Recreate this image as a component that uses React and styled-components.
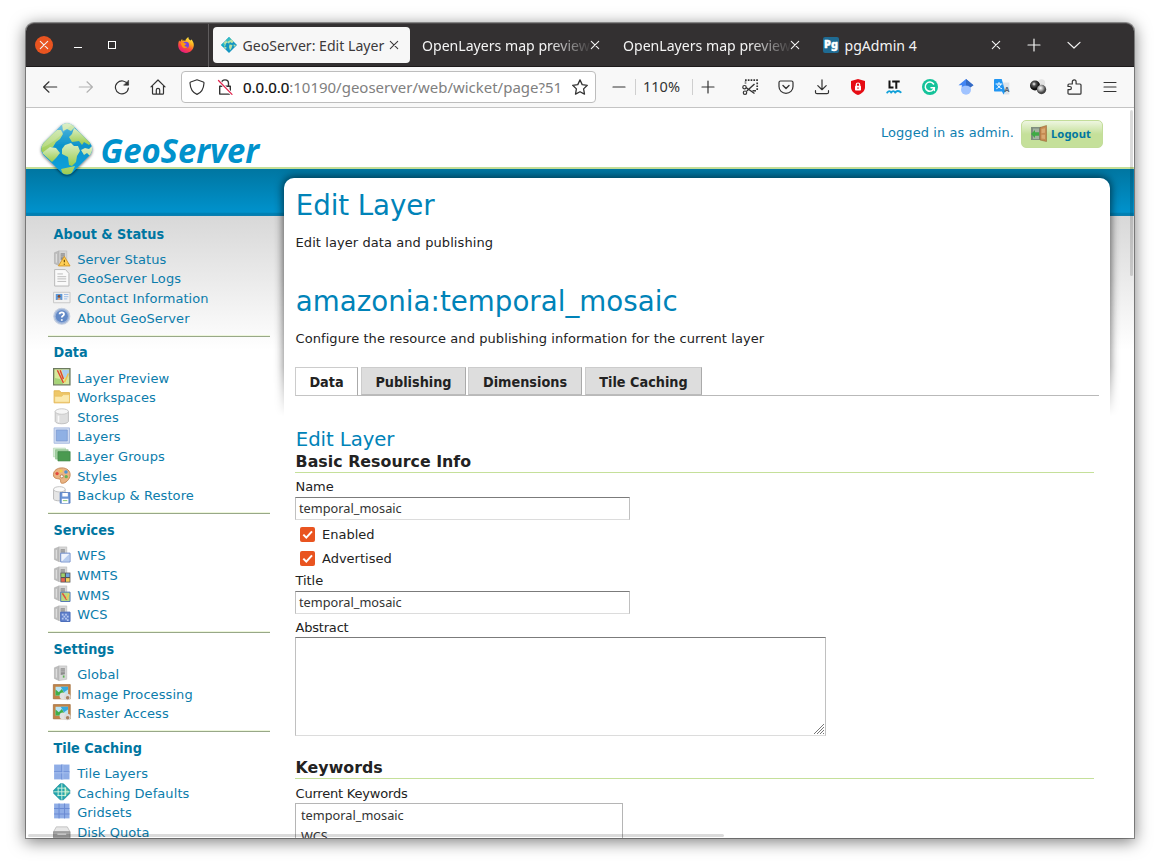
import React from "react";
import styled, { createGlobalStyle, css } from "styled-components";

const ui = '"Noto Sans", "Open Sans", sans-serif';
const page = '"DejaVu Sans", Verdana, sans-serif';
const heading = '"DejaVu Sans Condensed", "DejaVu Sans", Tahoma, sans-serif';
const link = "#0076a1";

const GlobalStyle = createGlobalStyle`
  * { box-sizing: border-box; }
  body { margin: 0; background: #fff; overflow: hidden; }
  h1, h2, h3, p, ul { margin: 0; padding: 0; font-weight: normal; }
  svg { display: block; flex: none; overflow: visible; }
`;

const Desktop = styled.div`
  width: 1160px;
  height: 867px;
  padding: 23px 26px 29px;
  overflow: hidden;
`;

const Window = styled.div`
  position: relative;
  width: 1108px;
  height: 815px;
  display: flex;
  flex-direction: column;
  border-radius: 8px 8px 0 0;
  box-shadow: 0 0 0 1px rgba(0, 0, 0, 0.36), 0 3px 16px 1px rgba(0, 0, 0, 0.5);
`;

/* ---------- title bar ---------- */

const TitleBar = styled.div`
  height: 44px;
  flex: none;
  display: flex;
  align-items: center;
  background: #333031;
  border-top: 1px solid #4b4849;
  border-bottom: 1px solid #1d1a1b;
  border-radius: 8px 8px 0 0;
  color: #f4f4f4;
  font: 14.1px ${ui};
`;

const WindowControls = styled.div`
  width: 183px;
  height: 43px;
  display: flex;
  align-items: center;
  border-right: 1px solid #5f5c5d;
  flex: none;
`;

const CloseWindow = styled.div`
  width: 18px;
  height: 18px;
  margin-left: 9px;
  border-radius: 50%;
  background: #e95420;
  display: grid;
  place-items: center;
`;

const Minimise = styled.div`
  width: 8px;
  height: 1px;
  margin: 5px 26px 0 21px;
  background: #fff;
`;

const Maximise = styled.div`
  width: 8px;
  height: 8px;
  border: 1px solid #fff;
  margin-right: 62px;
`;

const Tab = styled.div`
  width: ${(p) => p.$w}px;
  height: 36px;
  padding: 0 ${(p) => p.$end || 12}px 0 ${(p) => p.$pad || 8}px;
  display: flex;
  align-items: center;
  border-radius: 4px;
  flex: none;
  gap: 5.5px;
  ${(p) => p.$active && css`
    margin-left: 4px;
    background: #f7f7f7;
    color: #3c3a3b;
  `}
`;

const TabTitle = styled.span`
  flex: 1;
  min-width: 0;
  padding-top: 2px;
  line-height: 20px;
  white-space: nowrap;
  overflow: hidden;
  ${(p) => p.$fade && css`
    margin-right: -5px;
    mask-image: linear-gradient(to right, #000 75%, transparent 101%);
  `}
`;

const TabButton = styled.div`
  width: 40px;
  display: grid;
  place-items: center;
`;

/* ---------- navigation toolbar ---------- */

const Toolbar = styled.div`
  height: 41px;
  flex: none;
  display: flex;
  align-items: center;
  padding: 0 6px;
  background: #f8f8f8;
  border-bottom: 1px solid #c4c4c4;
  color: #333;
  font: 14.5px ${ui};
`;

const Slot = styled.div`
  width: ${(p) => p.$w || 36}px;
  height: 32px;
  margin-right: ${(p) => p.$end || 0}px;
  display: grid;
  place-items: center;
  flex: none;
  color: ${(p) => (p.$dim ? "#b2b2b2" : "#333")};
`;

const UrlBar = styled.div`
  width: 415px;
  height: 32px;
  margin: 0 6px 0 5px;
  padding: 0 7px 0 7px;
  display: flex;
  align-items: center;
  background: #fff;
  border: 1px solid #bdbdbd;
  border-radius: 4px;
  flex: none;
`;

const Security = styled.div`
  display: flex;
  gap: 12px;
`;

const UrlText = styled.span`
  flex: 1;
  margin-left: 10px;
  font-size: 14.97px;
  line-height: 22px;
  white-space: nowrap;
  overflow: hidden;
  color: #808080;
  b { font-weight: normal; color: #0c0c0c; -webkit-text-stroke: 0.2px #0c0c0c; }
`;

const Divider = styled.div`
  width: 1px;
  height: 16px;
  background: #cfcfcf;
`;

const Zoom = styled.div`
  width: 56px;
  padding-left: 7px;
  margin-top: -2px;
`;

/* ---------- page ---------- */

const Viewport = styled.div`
  position: relative;
  flex: 1;
  min-height: 0;
  overflow: hidden;
  background: #fff;
  font: 13px ${page};
  letter-spacing: 0.08px;
  color: #222;
`;

const Header = styled.div`
  height: 59px;
  display: flex;
  justify-content: flex-end;
  padding: 12px 31px 0 0;
`;

const Logo = styled.div`
  position: absolute;
  left: 11px;
  top: 11px;
  z-index: 2;
`;

const Login = styled.span`
  color: #0e80b0;
  line-height: 26px;
  margin-right: 7px;
`;

const Logout = styled.div`
  width: 82px;
  height: 28px;
  display: flex;
  align-items: center;
  gap: 4px;
  padding: 0 0 2px 8px;
  border-radius: 5px;
  border: 1px solid #c3dd9a;
  background: linear-gradient(#eef6e1 0, #c5e09a 50%);
  color: ${link};
  font: bold 11.2px ${ui};
`;

const BlueBar = styled.div`
  height: 49px;
  border-top: 2px solid #c5df98;
  border-bottom: 1px solid #0a7eb0;
  background: linear-gradient(#0076a1, #0092cc 94%, #0080b3 96%);
`;

const Body = styled.div`
  display: flex;
  align-items: flex-start;
  height: 622px;
  background: linear-gradient(#d8d8d8, #fff 134px);
`;

const Sidebar = styled.nav`
  width: 258px;
  flex: none;
  padding: 2px 14px 0 22px;
`;

const Section = styled.section`
  padding: 6.7px 0 7.6px 5px;
  border-bottom: 1px solid #98a888;
  box-shadow: inset 0 -1px #eef7dc;
`;

const SectionTitle = styled.h3`
  && { font-weight: bold; }
  margin-bottom: 6.8px;
  padding-left: 0.5px;
  color: ${link};
  font: 14.3px/18px ${heading};
  letter-spacing: 0;
`;

const NavItem = styled.li`
  list-style: none;
  display: flex;
  align-items: center;
  gap: 6.6px;
  height: 19.66px;
  color: #0b7cab;
  white-space: nowrap;
  svg { margin-top: -2px; }
`;

const PanelWrap = styled.div`
  position: relative;
  z-index: 1;
`;

const Shade = styled.div`
  position: absolute;
  z-index: 0;
  left: -12px;
  right: -12px;
  top: -48px;
  height: 248px;
  padding: 10px 12px 0;
  overflow: hidden;
  mask-image: linear-gradient(#000 45%, rgba(0, 0, 0, 0.75) 80%, transparent);
  &::before {
    content: "";
    display: block;
    height: 300px;
    border-radius: 10px;
    box-shadow: 0 0 8px 1px rgba(0, 0, 0, 0.62);
  }
`;

const Card = styled.main`
  position: relative;
  z-index: 1;
  width: 826px;
  height: 660px;
  margin-top: -38px;
  padding: 11px 11px 0;
  background: #fff;
  border-radius: 10px 10px 0 0;
`;

const PageTitle = styled.h1`
  padding-left: 0.8px;
  font-size: 27.7px;
  line-height: 34px;
  letter-spacing: ${(p) => (p.$top ? 0.02 : -0.1)}px;
  margin-top: ${(p) => p.$top || 0}px;
  color: #0083b8;
`;

const Description = styled.p`
  padding-left: 0.5px;
  line-height: 20px;
  margin-top: 10px;
`;

const Tabs = styled.div`
  display: flex;
  height: 29px;
  margin-top: 17.6px;
  border-bottom: 1px solid #b9b9b9;
`;

const PageTab = styled.div`
  width: ${(p) => p.$w}px;
  height: ${(p) => (p.$active ? 29 : 28)}px;
  margin-right: ${(p) => p.$gap || 0}px;
  text-align: center;
  font: bold 14.3px/29px ${heading};
  letter-spacing: 0;
  border: 1px solid #ccc;
  border-right-color: #aaa;
  border-bottom-color: ${(p) => (p.$active ? "#c4c4c4" : "#bbb")};
  background: ${(p) => (p.$active ? "#fff" : "#ddd")};
`;

const FormTitle = styled.h2`
  margin-top: 32px;
  margin-bottom: -1px;
  padding-left: 0.8px;
  font-size: 19.7px;
  line-height: 24px;
  letter-spacing: -0.08px;
  color: #0083b8;
`;

const Legend = styled.h3`
  && { font-weight: bold; }
  width: 799px;
  height: 22px;
  margin: ${(p) => p.$top || 0}px 0 4px;
  padding-left: 0.6px;
  font-size: 15.8px;
  line-height: 21px;
  letter-spacing: 0.03px;
  border-bottom: 1px solid #c5e09a;
`;

const Label = styled.div`
  height: 20px;
  line-height: ${(p) => p.$line || 20}px;
  padding-left: 0.5px;
  letter-spacing: ${(p) => (p.$tight ? -0.2 : -0.05)}px;
  margin-top: ${(p) => p.$top || 0}px;
`;

const field = css`
  border: 1px solid #c0c0c0;
  border-top-color: #7b7b7b;
  border-bottom-color: #dcdcdc;
  background: #fff;
`;

const TextField = styled.div`
  ${field}
  width: 335px;
  height: 23px;
  padding-left: 3px;
  font: 12.75px/20px ${ui};
  letter-spacing: 0;
  color: #333;
  margin-bottom: ${(p) => p.$bottom || 0}px;
`;

const CheckRow = styled.div`
  height: 24px;
  display: flex;
  align-items: center;
  gap: 7px;
  padding: 1px 0 0 5px;
  line-height: 21px;
  letter-spacing: 0;
`;

const TextArea = styled.div`
  ${field}
  width: 531px;
  height: 99px;
  display: flex;
  align-items: flex-end;
  justify-content: flex-end;
  padding: 1px;
`;

const KeywordList = styled.div`
  width: 328px;
  height: 90px;
  padding: 1px 5px;
  border: 1px solid #b5b5b5;
  font: 12.75px/21px ${ui};
  letter-spacing: 0;
  color: #333;
`;

const ScrollThumb = styled.div`
  position: absolute;
  z-index: 3;
  background: rgba(0, 0, 0, 0.14);
  border-radius: 2px;
  ${(p) => p.$vertical
    ? css`top: 2px; right: 1px; width: 3px; height: 166px;`
    : css`left: 2px; bottom: 1px; width: 696px; height: 3px;`}
`;

/* ---------- drawings ---------- */

const Icon = ({ s = 16, children, ...rest }) => (
  <svg width={s} height={s} viewBox="0 0 16 16" fill="none" stroke="currentColor" strokeWidth="1.2" strokeLinecap="round" strokeLinejoin="round" {...rest}>
    {children}
  </svg>
);

const Cross = ({ s = 8 }) => (
  <svg width={s} height={s} viewBox="0 0 8 8" stroke="currentColor" strokeWidth="1.1" strokeLinecap="round">
    <path d="M.3.3l7.4 7.4M7.7.3L.3 7.7" />
  </svg>
);

const Firefox = () => (
  <Icon stroke="none">
    <defs>
      <linearGradient id="fx" x1="0.8" y1="0" x2="0.3" y2="1">
        <stop offset="0" stopColor="#fff44f" /><stop offset=".35" stopColor="#ffb01e" />
        <stop offset=".65" stopColor="#ff4a3c" /><stop offset="1" stopColor="#e31587" />
      </linearGradient>
    </defs>
    <path fill="url(#fx)" d="M1.2 3.600l.9 1.200C2.800 3.600 3.400 2.500 4.200 2l.2 1.700c1.100-.2 2-.1 2.800.3C7.600 2.500 9 .8 10.400 0c-.1 2 .9 2.500 2 3.600.6-.3.7-.8.6-1.300C15 3.900 16 6.300 15.800 8.600 15.500 13 12 16 8 16S.3 12.700.2 8.600C.1 6.800.6 5 1.200 3.600z" />
    <circle cx="7.800" cy="8" r="3.200" fill="#7542e5" />
    <path fill="#ff980e" d="M2.800 6c1.200-.9 3-.9 4 .2l1.700.5c.3.800-1.300 1-1.700 1.400C6.100 9 7.200 10.300 9.500 9.700c-1 2-4.300 1.900-5.400-.2-.6-1.100-1.200-2.400-1.300-3.500z" />
  </Icon>
);

const GeoFavicon = () => (
  <Icon stroke="none">
    <path fill="#1295c2" d="M8 0l8 8-8 8-8-8z" />
    <path fill="#b9e0a5" d="M7 1.500L9 1l3.600 3.600-1.500 1.700L9 5 8 6.800 6.700 5.500 5 6.500 4 9.500 1.500 7zM8.500 7.500l3 .5-1 3.200L9 13.500 8 10zM12.500 7.500L15 8l-2 2zM3.500 9.500l2 .8-.5 2-2-2z" />
    <path fill="#0fb3c9" d="M8 0l2.400 2.400L6 5 5 3zM0 8l2.500-2.500L4 7.500 2.300 10.200z" opacity=".75" />
  </Icon>
);

const PgIcon = () => (
  <Icon stroke="none">
    <rect width="16" height="16" rx="2" fill="#1f6b93" />
    <text x="8" y="11" textAnchor="middle" fontFamily="Noto Sans" fontWeight="900" fontSize="11" fill="#fff" stroke="#fff" strokeWidth=".4">Pg</text>
  </Icon>
);

const Back = () => <Icon><path d="M14.700 8H1.800M7 2.800L1.600 8 7 13.200" /></Icon>;
const Forward = () => <Icon><path d="M1.300 8h12.900M9 2.800L14.400 8 9 13.200" /></Icon>;
const Reload = () => (
  <Icon><path d="M13.800 5.600A6.500 6.500 0 1 0 14.400 9" /><path d="M14.600 1.500v4.700H9.900z" fill="currentColor" strokeWidth=".6" /></Icon>
);
const Home = () => (
  <Icon><path d="M1 7.900L8 1l7 6.900M2.500 6.900v7.300c0 .6.3.9.9.9h9.200c.6 0 .9-.3.9-.9V6.900M6.300 15v-4c0-1 .5-1.700 1.700-1.700s1.700.7 1.700 1.700v4" /></Icon>
);
const Shield = () => (
  <Icon><path d="M8 .8l6.300 2.200c.6.200.7.600.7 1C14.700 9.500 12 13.800 8 15.400 4 13.800 1.300 9.500 1 4c0-.4.100-.8.700-1z" /></Icon>
);
const InsecureLock = () => (
  <Icon strokeWidth="1.400">
    <path d="M4.500 7V4.200C4.500 2 6 .9 8 .9s3.500 1.100 3.500 3.300V7M2.700 7.300h10.600v7.800H2.700z" />
    <path d="M1.500 1.500L15 15.400" stroke="#fff" strokeWidth="3" />
    <path d="M1.500 1.500L15 15.400" stroke="#e22850" strokeWidth="1.300" />
  </Icon>
);
const Star = () => (
  <Icon strokeWidth="1.300"><path d="M8 .9l2.200 4.700 5.100.7-3.700 3.600.9 5.200L8 12.700 3.500 15.100l.9-5.200L.7 6.300l5.100-.7z" /></Icon>
);
const Minus = () => <Icon s={12}><path d="M0 8h16" strokeWidth="1.600" /></Icon>;
const Plus = ({ s = 12 }) => <Icon s={s}><path d="M0 8h16M8 0v16" strokeWidth="1.600" /></Icon>;
const Chevron = () => <Icon s={12}><path d="M0 4.500l8 7.500 8-7.500" strokeWidth="1.600" /></Icon>;
const Screenshot = () => (
  <Icon strokeLinecap="butt">
    <path d="M3 1.200H16" strokeWidth="1.700" strokeDasharray="1.700 1.100" />
    <path d="M15.200 3.500V12" strokeWidth="1.700" strokeDasharray="1.700 1.200" />
    <path d="M3.500 2.600v2.400" strokeWidth="1.700" strokeDasharray="1 .8" />
    <path d="M4.800 12L12.500 5M4 8.500l8.500 6" strokeWidth="1.400" />
    <circle cx="2.500" cy="8.200" r="1.700" />
    <circle cx="3" cy="13.700" r="1.700" />
    <path d="M10.500 11.800h3.500" strokeWidth="1.500" />
  </Icon>
);
const Pocket = () => (
  <Icon><path d="M2.500 2h11c.9 0 1.500.6 1.500 1.500v4c0 4-3.100 6.800-7 6.800S1 11.500 1 7.500v-4C1 2.600 1.600 2 2.500 2z" /><path d="M5 6.500l3 2.900 3-2.900" strokeWidth="1.400" /></Icon>
);
const Download = () => (
  <Icon><path d="M8 .8v9.700M3.800 6.600L8 10.700l4.200-4.100M1.500 11.700v1.500c0 .9.500 1.500 1.500 1.500h10c1 0 1.500-.6 1.500-1.500v-1.500" /></Icon>
);
const Blocker = () => (
  <Icon stroke="none">
    <path fill="#e60c14" d="M8 0l7 2v6c0 4-3 6.500-7 8-4-1.500-7-4-7-8V2z" />
    <rect x="5" y="6.700" width="6" height="4.800" rx=".8" fill="#fff" />
    <path d="M6.300 7V5.500c0-2 3.400-2 3.400 0V7" stroke="#fff" strokeWidth="1.200" fill="none" />
    <path fill="#e60c14" d="M7.500 8.200h1v1.900h-1z" />
  </Icon>
);
const LanguageTool = () => (
  <Icon stroke="none">
    <path fill="none" stroke="#141414" strokeWidth="2" strokeLinecap="butt" strokeLinejoin="miter" d="M3.500 1.500v7H7.500M6.200 2.500h7.500M10.300 2.500v7.200" />
    <path stroke="#12a0d8" strokeWidth="1.900" d="M1.200 13.600c1.500-2 2.800-2 4 0 1.300-2 2.800-2 4 0 1.500-2 3.200-2 5.500-.3" fill="none" />
  </Icon>
);
const Grammarly = () => (
  <Icon stroke="none">
    <circle cx="8" cy="8" r="8" fill="#15c39a" />
    <path d="M11.600 5A4.600 4.600 0 1 0 12.300 8.800H9" stroke="#fff" strokeWidth="1.500" fill="none" />
    <path d="M12.400 8.600v3" stroke="#fff" strokeWidth="1.300" />
  </Icon>
);
const Scholar = () => (
  <Icon stroke="none">
    <circle cx="8" cy="10.700" r="5" fill="#a0c3ff" />
    <path fill="#4285f4" d="M8 0L.5 6.200h3.600L3.500 8.500C5 6 11 6 12.500 8.500l-.6-2.300h3.600z" />
    <path fill="#356ac3" d="M8 0l7.500 6.200-3 2.400C11.500 6.900 10 6.200 8 6.200z" />
  </Icon>
);
const Translate = () => (
  <Icon stroke="none">
    <path fill="#dfe3e8" d="M7 3.500h8.300v12H9z" />
    <path fill="#2196f3" d="M0 1C0 .5.500 0 1 0h6.700l3.500 12.500H1c-.6 0-1-.4-1-1zM8 12.500h3L9.500 15.500z" />
    <path stroke="#fff" strokeWidth="1" d="M2 5h6M5 3.500V5M6.800 5.300C6 7.500 4 9 2.700 9.600M3.500 6c.7 1.500 2.200 3 4 3.600" />
    <text x="10.600" y="12.800" fontFamily="Noto Sans" fontSize="7" fontWeight="bold" fill="#56636e">A</text>
  </Icon>
);
const Spheres = () => (
  <Icon stroke="none">
    <defs>
      <radialGradient id="dk" cx=".4" cy=".35"><stop offset="0" stopColor="#fff" /><stop offset=".4" stopColor="#555" /><stop offset="1" stopColor="#0a0a0a" /></radialGradient>
      <radialGradient id="lt" cx=".4" cy=".35"><stop offset="0" stopColor="#fff" /><stop offset=".5" stopColor="#aaa" /><stop offset="1" stopColor="#444" /></radialGradient>
    </defs>
    <circle cx="11.500" cy="4" r="3.700" fill="#e4e4e4" />
    <circle cx="5" cy="6.500" r="5" fill="url(#dk)" />
    <circle cx="11.500" cy="10.500" r="4.700" fill="url(#lt)" />
  </Icon>
);
const Puzzle = () => (
  <Icon><path d="M3 5h3.300V2.800a1.900 1.900 0 0 1 3.800 0V5H14c.6 0 1 .4 1 1v8.200c0 .5-.4.900-1 .9H3c-.6 0-1-.4-1-.9v-3.500h1.800a1.600 1.600 0 0 0 0-3.200H2V6c0-.6.400-1 1-1z" /></Icon>
);
const Menu = () => <Icon><path d="M2 3.500h12M2 8h12M2 12.500h12" strokeWidth="1.100" /></Icon>;

const GeoLogo = () => (
  <svg width="240" height="64" viewBox="0 0 240 64">
    <defs>
      <linearGradient id="land" x1="0" y1="0" x2="0" y2="1"><stop offset="0" stopColor="#d9eec5" /><stop offset="1" stopColor="#9bcb4c" /></linearGradient>
      <linearGradient id="sea" x1="0" y1="0" x2="0" y2="1"><stop offset="0" stopColor="#58b8dc" /><stop offset=".45" stopColor="#0a93cb" /><stop offset="1" stopColor="#0aa3de" /></linearGradient>
      <clipPath id="gem"><path d="M24 6.500q6-5 12 0L53 24q4.500 6 0 12L36 53q-6 5-12 0L6.500 36q-4.500-6 0-12z" /></clipPath>
      <filter id="soft" x="-20%" y="-20%" width="140%" height="150%"><feDropShadow dx="0" dy="1" stdDeviation="1.500" floodOpacity=".6" /></filter>
    </defs>
    <g>
      <path filter="url(#soft)" fill="url(#sea)" d="M24 6.500q6-5 12 0L53 24q4.500 6 0 12L36 53q-6 5-12 0L6.500 36q-4.500-6 0-12z" />
      <g clipPath="url(#gem)" fill="url(#land)">
        <path d="M25 5L35 2l4 5-5 5-4-2-4 2zM20 11l4 0 2 4-3 5-4 3-3 5-4 1-1 3 3 1-3 2-8-3V24z" />
        <path d="M13 28l6 1 4 5-4 5-4 4L5 34z" />
        <path d="M28 26l6-2 3 3 4 0 2 5-3 5-1 6-4 4-3-1-1-8-6-3 0-5z" />
        <path d="M37 9l8 6 9 9-2 2-5-3-2 3-3-4-7 1-3-5 3-3z" />
        <path d="M44 31l4-2 4 1 3-3 2 3-4 7-3-3-3 2zM24 50l14-3-4 9h-8z" />
      </g>
      <path clipPath="url(#gem)" fill="#fff" opacity=".17" d="M2 30Q15 26 30 10T60 30V0H0z" />
    </g>
    <text x="63.500" y="43.500" textLength="158.500" lengthAdjust="spacingAndGlyphs" fontFamily="Open Sans, Noto Sans, sans-serif" fontStyle="italic" fontWeight="bold" fontSize="34" fill="#0092cc" letterSpacing="0">GeoServer</text>
  </svg>
);

const DoorIcon = () => (
  <svg width="17" height="17" viewBox="0 0 17 17">
    <path fill="#7f8e7e" d="M1 2h10v13H1z" /><path fill="#a3b3a0" d="M3 3.500h6V14H3z" />
    <path fill="#3faa45" d="M1 9l4-4v2.300h4v3.500H5V13z" />
    <path fill="#c48a50" stroke="#8f5a2c" strokeWidth=".5" d="M10 2.500L16.500.5v16L10 15z" />
    <path fill="#d9a870" d="M11.500 4l3.500-.8v4.600l-3.500.4zM11.500 9.700l3.500.1v4.300l-3.500-.5z" />
  </svg>
);

const Tower = () => (
  <g>
    <path fill="#bdbdbd" stroke="#a9a9a9" strokeWidth=".5" d="M1.300 2.500L5.500.8v13.400L1.300 12.300z" />
    <path fill="#d6d6d6" stroke="#b5b5b5" strokeWidth=".5" d="M5.500.8h7V13L5.500 14.200z" />
    <path fill="#8c8c8c" d="M7 3h3.800v5.500L7 9z" />
    <path stroke="#d0d0d0" strokeWidth=".6" d="M7 4.500h3.800M7 6.200h3.800" />
    <path stroke="#e6e6e6" strokeWidth=".9" d="M3 3.500v8" />
  </g>
);
const GlobeGrid = () => (
  <>
    <path fill="#23a5ad" stroke="#158a96" strokeWidth=".6" strokeLinejoin="round" d="M6.500.7h3L15.300 6.500v3L9.500 15.300h-3L.7 9.500v-3z" />
    <path fill="#8cd9a0" d="M10 3l5 5-5 5z" opacity=".7" />
    <path stroke="#d8f5df" strokeWidth=".8" d="M8 1v14M4.700 4v8M11.300 4v8M1 8h14M4 4.700h8M4 11.300h8" />
  </>
);
const Picture = () => (
  <>
    <path fill="#c08448" stroke="#9c6633" strokeWidth=".6" d="M.3.500h15.400v13H.3z" />
    <path fill="#b8e4f5" d="M2.300 2.500h11.400v8H2.300z" /><path fill="#3fae49" d="M2.300 10.500V5l3 2.500L8 4.500l3 4.500v1.500z" />
    <path fill="#35a9dd" d="M7 2.500h6.700v2.600L10 7.500z" />
    <circle cx="9" cy="10.800" r="3" fill="#e2e2e2" /><circle cx="13" cy="11.800" r="3" fill="#dadada" /><circle cx="13.300" cy="12.500" r="1.600" fill="#a9805f" />
  </>
);

const glyphs = {
  status: <><Tower /><path fill="#ffcf56" stroke="#d39421" strokeWidth=".8" d="M10.300 5.800l5.200 8.700H5z" /><path stroke="#6d4a00" strokeWidth="1.100" d="M10.300 8.800v2.400M10.300 12.400v1" /></>,
  logs: <><path fill="#fafafa" stroke="#b9b9b9" strokeWidth=".9" d="M1.500.5h9.800L14.500 4v11.500h-13z" /><path stroke="#bcbcbc" strokeWidth=".9" d="M4 4.500h5M4 7h8M4 9h8M4 11.300h8" /></>,
  contact: <><path fill="#f2f2f2" stroke="#c4c4c4" strokeWidth=".8" d="M.5 3h15v9.500H.5z" /><path fill="#5b97d8" d="M2.500 4.500h6v5.500h-6z" /><circle cx="5.500" cy="6.700" r="1.200" fill="#8a4b2a" /><path fill="#e9a878" d="M4 10c0-2.500 3-2.500 3 0z" /><path stroke="#9cbce6" strokeWidth=".9" d="M10 5h4M10 7h4M10 9h3" /></>,
  about: <><circle cx="8" cy="7.500" r="7.300" fill="#9cb4da" stroke="#c5cfe0" strokeWidth="1" /><circle cx="8" cy="7.500" r="5.500" fill="#6289c6" /><path stroke="#fff" strokeWidth="1.600" fill="none" d="M6 5.700c0-2.400 4-2.300 4-.1C10 7.100 8 7.100 8 8.700M8 10.300v1.400" /></>,
  preview: <><path fill="#d9e99b" stroke="#6c7a60" strokeWidth="1.200" d="M.6.600h14.800v14.800H.6z" /><path fill="#a9cff1" d="M8 1.500h6.500v6L10 9z" /><path fill="#a5d478" d="M1.500 9l5 1 3 4.500h-8z" /><path stroke="#dd4533" strokeWidth="1.300" d="M4 2l5.500 11.500M6.500 2l3 8" /><path stroke="#f3c34e" strokeWidth="1.400" d="M14 5L10.500 13" /></>,
  folder: <><path fill="#eec768" stroke="#e3b451" strokeWidth=".8" d="M1 2.500h5l1.500 1.700H15v9.300H1z" /><path fill="#fbe9ad" stroke="#e9c066" strokeWidth=".7" d="M1.500 13v-5.500H8L9.500 6H15v7z" /></>,
  store: <><path fill="#dedede" stroke="#bbb" strokeWidth=".8" d="M2 3v9.300C3 15 13 15 14 12.300V3z" /><ellipse cx="8" cy="3.200" rx="6" ry="2.500" fill="#f6f6f6" stroke="#c5c5c5" strokeWidth=".8" /><path stroke="#f8f8f8" strokeWidth="1.500" d="M5 7v6" /></>,
  layer: <><path fill="#d0dcf2" stroke="#a4b7de" strokeWidth=".8" d="M1 .8h14v14H1z" /><path fill="#8fb0e4" stroke="#7693cd" strokeWidth=".6" d="M3 2.700h10v10H3z" /></>,
  groups: <><path fill="#d5ebd4" stroke="#b4d8b2" strokeWidth=".6" d="M.4 1h11v8H.4z" /><path fill="#a2cfa0" stroke="#8abf88" strokeWidth=".6" d="M2.300 2.500h11.500v8.500H2.300z" /><path fill="#4b9a50" stroke="#3d8445" strokeWidth=".6" d="M4.500 4.200h11.100v8.500H4.500z" /></>,
  styles: <><path fill="#e9b382" stroke="#c0824f" strokeWidth=".8" d="M8 .8c5 0 7.600 3 7.600 6.200C15.600 11.500 11 15 8.500 14.800c-3-.2-.3-3.800-3-4C3.500 10.500.4 10.500.4 7 .4 3 4 .8 8 .8z" /><circle cx="3.700" cy="6" r="1.500" fill="#e3483c" /><circle cx="7.300" cy="3.600" r="1.400" fill="#f3cf4a" /><circle cx="11.800" cy="4.500" r="1.600" fill="#4e93d4" /><circle cx="12" cy="8.800" r="1.500" fill="#67b354" /><circle cx="8" cy="8.500" r="1.400" fill="#fff" stroke="#a0622f" strokeWidth=".6" /></>,
  backup: <><path fill="#e6e6e6" stroke="#b5b5b5" strokeWidth=".8" d="M.5 3v9C1.500 14 10 14 11 12V3z" /><ellipse cx="5.800" cy="3" rx="5.300" ry="2.400" fill="#fafafa" stroke="#bdbdbd" strokeWidth=".8" /><path fill="#6c95d6" stroke="#4a74ba" strokeWidth=".7" d="M6.500 6h9v9.600h-9z" /><path fill="#fff" d="M8.500 6.300h5v3.200h-5zM8 11.500h6v4H8z" /><path stroke="#79c15a" strokeWidth=".8" d="M9 13.300h4" /></>,
  wfs: <><Tower /><path fill="#eef3fc" stroke="#6d8bc9" strokeWidth=".9" d="M7 6.500h8.500v8H7z" /><path fill="#9fbae8" d="M15 7V14H8z" opacity=".7" /></>,
  wmts: <><Tower /><path fill="#555" d="M6.800 6h9v9h-9z" /><path fill="#9fd06a" d="M7.500 6.700h3.300V10H7.500z" /><path fill="#6fa4e0" d="M11.800 6.700h3.300V10h-3.300z" /><path fill="#e9624e" d="M7.500 11h3.300v3.300H7.500z" /><path fill="#f1cf5b" d="M11.800 11h3.300v3.300h-3.300z" /></>,
  wms: <><Tower /><path fill="#b8da82" stroke="#5479b5" strokeWidth=".9" d="M7 6.500h8.500V15H7z" /><path stroke="#e0523d" strokeWidth="1.400" d="M8.500 7.500l4 6" /><path stroke="#f3cb4e" strokeWidth="1.300" d="M14.500 8l-2 5" /></>,
  wcs: <><Tower /><path fill="#6282cc" stroke="#4a6cba" strokeWidth=".9" d="M7 6.500h8.500V15H7z" /><path fill="#b7c9ef" d="M8 8h1.600v1.600H8zM11 8h1.600v1.600H11zM9.500 9.700h1.600v1.600H9.500zM12.600 9.700h1.600v1.600h-1.600zM8 11.500h1.600v1.600H8zM11 11.500h1.600v1.600H11zM12.600 13h1.600v1.600h-1.600z" /></>,
  global: <><Tower /><path stroke="#5cb353" strokeWidth="1.500" d="M9.700 9.500v2" /></>,
  image: <Picture />,
  tile: <><path fill="#8fade6" d="M1 .5h14v13.500H1z" /><path stroke="#6d8fd6" strokeWidth="1" d="M8 .5v13.500M1 7h14" /><path stroke="#a9c1ef" strokeWidth=".8" d="M9 .5v13.500M1 8h14" /></>,
  globe: <GlobeGrid />,
  grid: <><path fill="#8fade6" d="M1 .5h14v13.500H1z" /><path stroke="#6a8bd2" strokeWidth=".9" d="M5.500.5v13.500M10.500.5v13.500M1 5h14M1 10h14" /></>,
  disk: <><path fill="#e6e6e6" stroke="#b9b9b9" strokeWidth=".7" d="M3 3.500h10L15.500 8H.5z" /><path fill="#a6a6a6" stroke="#8a8a8a" strokeWidth=".7" d="M.5 8h15v5.500H.5z" /><path stroke="#e2e2e2" strokeWidth="1.200" d="M4 10.300h8" /></>,
};

const NavIcon = ({ name }) => (
  <svg width="17.6" height="17.6" viewBox="0 0 16 16" fill="none">{glyphs[name]}</svg>
);

const Check = () => (
  <svg width="15" height="15" viewBox="0 0 15 15">
    <rect width="15" height="15" rx="2" fill="#e95420" />
    <path d="M3.300 7.600l3 3L12 4.300" fill="none" stroke="#fff" strokeWidth="2" />
  </svg>
);

const Grip = () => (
  <svg width="10" height="10" viewBox="0 0 10 10" stroke="#777" strokeWidth="1">
    <path d="M0 10L10 0M3 10l7-7M6 10l4-4M9 10l1-1" />
  </svg>
);

const menu = [
  ["About & Status", [["status", "Server Status"], ["logs", "GeoServer Logs"], ["contact", "Contact Information"], ["about", "About GeoServer"]]],
  ["Data", [["preview", "Layer Preview"], ["folder", "Workspaces"], ["store", "Stores"], ["layer", "Layers"], ["groups", "Layer Groups"], ["styles", "Styles"], ["backup", "Backup & Restore"]]],
  ["Services", [["wfs", "WFS"], ["wmts", "WMTS"], ["wms", "WMS"], ["wcs", "WCS"]]],
  ["Settings", [["global", "Global"], ["image", "Image Processing"], ["image", "Raster Access"]]],
  ["Tile Caching", [["tile", "Tile Layers"], ["globe", "Caching Defaults"], ["grid", "Gridsets"], ["disk", "Disk Quota"]]],
];

const extensions = [Screenshot, Pocket, Download, Blocker, LanguageTool, Grammarly, Scholar, Translate, Spheres, Puzzle, Menu];

export default function App() {
  return (
    <Desktop>
      <GlobalStyle />
      <Window>
        <TitleBar>
          <WindowControls>
            <CloseWindow><Cross /></CloseWindow>
            <Minimise />
            <Maximise />
            <Firefox />
          </WindowControls>
          <Tab $w={197} $active><GeoFavicon /><TabTitle>GeoServer: Edit Layer</TabTitle><Cross /></Tab>
          <Tab $w={201} $pad={12}><TabTitle $fade>OpenLayers map preview</TabTitle><Cross /></Tab>
          <Tab $w={200} $pad={12}><TabTitle $fade>OpenLayers map preview</TabTitle><Cross /></Tab>
          <Tab $w={203} $pad={12} $end={14}><PgIcon /><TabTitle>pgAdmin 4</TabTitle><Cross /></Tab>
          <TabButton><Plus /></TabButton>
          <TabButton><Chevron /></TabButton>
        </TitleBar>
        <Toolbar>
          <Slot><Back /></Slot>
          <Slot $dim><Forward /></Slot>
          <Slot><Reload /></Slot>
          <Slot><Home /></Slot>
          <UrlBar>
            <Security><Shield /><InsecureLock /></Security>
            <UrlText><b>0.0.0.0</b>:10190/geoserver/web/wicket/page?51</UrlText>
            <Star />
          </UrlBar>
          <Slot $w={33}><Minus /></Slot>
          <Divider />
          <Zoom>110%</Zoom>
          <Divider />
          <Slot $w={30} $end={9}><Plus /></Slot>
          {extensions.map((Ext, i) => <Slot key={i}><Ext /></Slot>)}
        </Toolbar>
        <Viewport>
          <Header>
            <Login>Logged in as admin.</Login>
            <Logout><DoorIcon />Logout</Logout>
          </Header>
          <Logo><GeoLogo /></Logo>
          <BlueBar />
          <Body>
            <Sidebar>
              {menu.map(([title, items]) => (
                <Section key={title}>
                  <SectionTitle>{title}</SectionTitle>
                  <ul>
                    {items.map(([icon, label]) => (
                      <NavItem key={label}><NavIcon name={icon} />{label}</NavItem>
                    ))}
                  </ul>
                </Section>
              ))}
            </Sidebar>
            <PanelWrap>
              <Shade />
              <Card>
                <PageTitle>Edit Layer</PageTitle>
                <Description>Edit layer data and publishing</Description>
                <PageTitle $top={32}>amazonia:temporal_mosaic</PageTitle>
                <Description>Configure the resource and publishing information for the current layer</Description>
                <Tabs>
                  <PageTab $w={63} $gap={3} $active>Data</PageTab>
                  <PageTab $w={105} $gap={2}>Publishing</PageTab>
                  <PageTab $w={114} $gap={3}>Dimensions</PageTab>
                  <PageTab $w={117}>Tile Caching</PageTab>
                </Tabs>
                <FormTitle>Edit Layer</FormTitle>
                <Legend>Basic Resource Info</Legend>
                <Label $line={19}>Name</Label>
                <TextField $bottom={2}>temporal_mosaic</TextField>
                <CheckRow><Check />Enabled</CheckRow>
                <CheckRow><Check />Advertised</CheckRow>
                <Label $top={1} $line={19}>Title</Label>
                <TextField>temporal_mosaic</TextField>
                <Label $top={3} $line={21} $tight>Abstract</Label>
                <TextArea><Grip /></TextArea>
                <Legend $top={21}>Keywords</Legend>
                <Label $line={21} $tight>Current Keywords</Label>
                <KeywordList>
                  <div>temporal_mosaic</div>
                  <div>WCS</div>
                </KeywordList>
              </Card>
            </PanelWrap>
          </Body>
          <ScrollThumb $vertical />
          <ScrollThumb />
        </Viewport>
      </Window>
    </Desktop>
  );
}
